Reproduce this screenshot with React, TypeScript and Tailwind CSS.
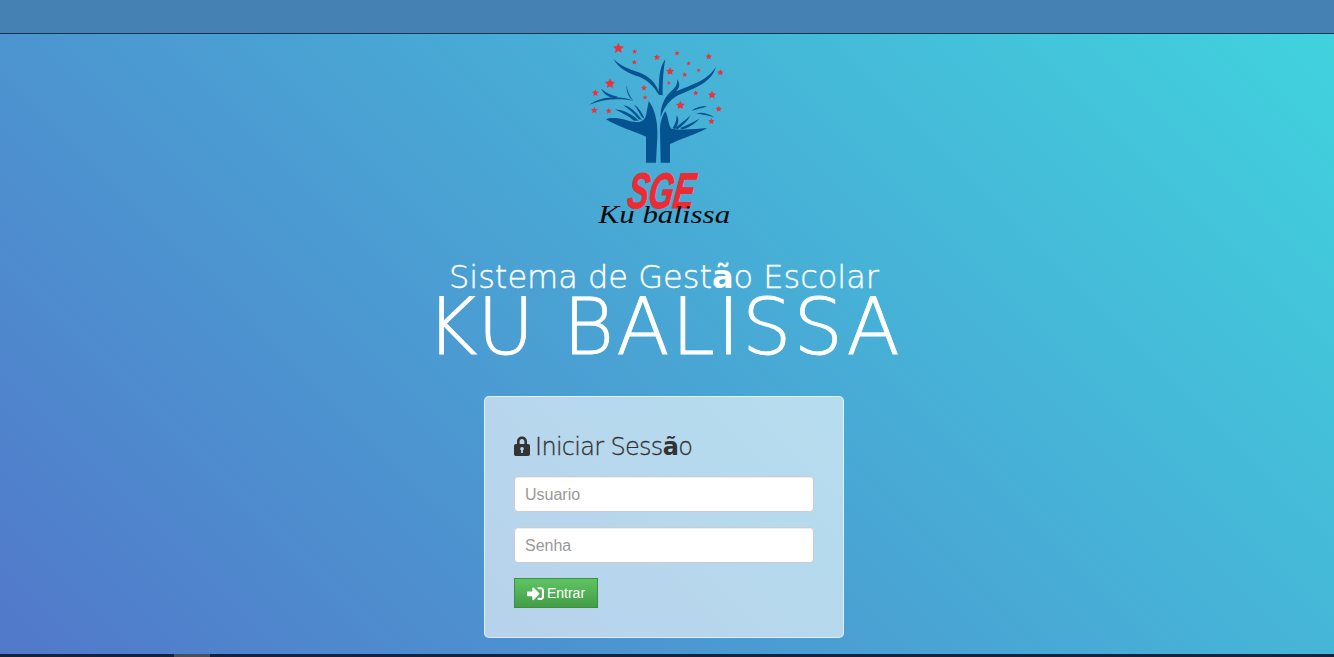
import React from 'react';
import { FaSignInAlt } from 'react-icons/fa';

const stars = [
  [145, 55, 17], [194, 65, 8], [193, 97, 8], [261, 82, 10], [321, 70, 8], [416, 80, 10],
  [356, 100, 7], [300, 124, 13], [344, 134, 8], [386, 121, 6], [451, 128, 10], [120, 161, 16],
  [76, 189, 11], [222, 174, 9], [296, 159, 6], [225, 202, 7], [377, 189, 8], [426, 195, 13],
  [73, 241, 11], [116, 243, 9], [331, 226, 14], [446, 237, 10], [424, 274, 10],
];

function starPoints(cx: number, cy: number, r: number) {
  const pts: string[] = [];
  for (let i = 0; i < 10; i++) {
    const rad = i % 2 === 0 ? r : r * 0.48;
    const a = -Math.PI / 2 + (i * Math.PI) / 5;
    pts.push(`${(cx + rad * Math.cos(a)).toFixed(1)},${(cy + rad * Math.sin(a)).toFixed(1)}`);
  }
  return pts.join(' ');
}

function Logo() {
  return (
    <svg viewBox="0 15 540 600" className="w-[180px] h-[200px] -ml-2 mt-px shrink-0">
      <g fill="#04528f">
        {/* trunks and hands */}
        <path d="M108 268 C118 262 140 264 160 268 C180 274 200 280 214 274 C226 268 228 258 230 246 L236 214 C252 232 264 270 262 320 L258 398 L228 398 L228 320 C190 304 140 288 108 268 Z" />
        <path d="M272 398 L270 300 C270 280 276 258 286 244 C296 262 294 284 304 296 C340 302 380 296 411 294 C400 304 350 320 300 342 L300 398 Z" />
        {/* fingers */}
        <path d="M134 238 C160 240 186 252 206 272 L192 272 C176 258 154 248 134 238 Z" />
        <path d="M160 226 C180 228 200 248 216 270 L206 268 C194 252 178 238 160 226 Z" />
        <path d="M192 224 C206 230 216 250 224 266 L216 262 C208 250 202 236 192 224 Z" />
        <path d="M320 256 C330 270 324 286 314 298 L308 294 C316 282 320 270 320 256 Z" />
        <path d="M362 256 C352 274 338 288 322 298 L314 294 C332 282 346 270 362 256 Z" />
        <path d="M388 266 C374 282 356 294 336 298 L330 294 C350 286 370 276 388 266 Z" />
        {/* branches */}
        <path d="M130 86 C150 108 180 118 210 128 C235 138 256 156 266 184 C268 150 266 116 286 88 C280 120 278 150 278 196 L266 194 C252 168 232 150 208 140 C176 130 146 116 130 86 Z" />
        <path d="M272 262 C270 230 284 198 310 178 C320 168 322 160 322 148 C332 164 328 174 318 184 C352 168 410 156 438 110 C424 162 362 178 324 196 C298 210 282 232 272 262 Z" />
        <path d="M58 224 C90 202 140 194 190 212 C140 204 100 208 58 224 Z" />
        <path d="M170 166 C172 182 178 198 190 212 C178 206 168 186 170 166 Z" />
        <path d="M94 176 C106 188 124 196 144 200 L132 204 C112 200 100 190 94 176 Z" />
        <path d="M364 242 C378 232 394 228 412 228 C398 234 382 238 364 242 Z" />
        <path d="M378 250 C396 246 416 250 432 262 C414 256 396 254 378 250 Z" />
      </g>
      <g fill="#ee3039">
        {stars.map(([x, y, r]) => (
          <polygon key={`${x}-${y}`} points={starPoints(x, y, r)} />
        ))}
      </g>
      <text
        transform="translate(268 535) skewX(-8)"
        textAnchor="middle"
        fill="#ee2a32"
        stroke="#ee2a32"
        strokeWidth="3"
        fontFamily="'Liberation Sans', sans-serif"
        fontWeight="700"
        fontStyle="italic"
        fontSize="150"
        textLength="200"
        lengthAdjust="spacingAndGlyphs"
      >
        SGE
      </text>
      <text
        x="283"
        y="578"
        textAnchor="middle"
        fill="#0a0a0a"
        fontFamily="'Liberation Serif', serif"
        fontStyle="italic"
        fontSize="76"
        textLength="395"
        lengthAdjust="spacingAndGlyphs"
      >
        Ku balissa
      </text>
    </svg>
  );
}

function LockIcon() {
  return (
    <svg viewBox="0 0 16 20" className="w-4 h-5 shrink-0 -mt-[3px]" fill="#333">
      <path
        fillRule="evenodd"
        d="M3 8V5.500C3 2.500 5.200 0.500 8 0.500s5 2 5 5V8h1.200c.9 0 1.800.8 1.800 1.700v8.600c0 .9-.9 1.700-1.800 1.700H1.800C.9 20 0 19.200 0 18.300V9.700C0 8.800.9 8 1.800 8H3zm2.600 0h4.800V5.600C10.400 4.100 9.400 3 8 3S5.600 4.100 5.600 5.600V8zM8 11a1.800 1.800 0 0 0-.9 3.350V17h1.800v-2.650A1.800 1.800 0 0 0 8 11z"
      />
    </svg>
  );
}

export default function App() {
  return (
    <div className="h-screen flex flex-col overflow-hidden font-['Liberation_Sans',sans-serif]">
      <main className="flex-1 min-h-0 bg-[linear-gradient(45deg,#5278ca,#40d4de)]">
        <div className="h-[34px] bg-[#4681b4] border-b border-[#17354d]" />
        <div className="w-[1328px] flex flex-col items-center">
          <Logo />
          <h1 className="mt-[23px] text-white text-center font-['DejaVu_Sans',sans-serif] font-extralight">
            <div className="text-[32px] leading-[38px] whitespace-nowrap [-webkit-text-stroke:0.4px_white]">
              Sistema de Gest<b className="font-bold [-webkit-text-stroke:0]">ã</b>o Escolar
            </div>
            <div className="text-[78px] leading-[62px] tracking-[2px] whitespace-nowrap [-webkit-text-stroke:0.8px_white]">
              KU BALISSA
            </div>
          </h1>
          <form className="mt-[38px] w-[360px] h-[242px] rounded-[5px] border border-white/60 bg-white/60 p-[29px] pt-[30px]">
            <h2 className="flex items-center gap-[5px] h-[40px] text-[#333] text-[24px] tracking-[-0.7px] font-['DejaVu_Sans',sans-serif] font-extralight [-webkit-text-stroke:0.3px_#333]">
              <LockIcon />
              <span>
                Iniciar Sess<b className="font-bold [-webkit-text-stroke:0]">ã</b>o
              </span>
            </h2>
            <input
              placeholder="Usuario"
              className="block mt-[9px] w-[300px] h-[36px] px-[10px] pt-[2px] text-base text-[#555] placeholder:text-[#999] bg-white border border-[#ccc] rounded-[4px] shadow-[inset_0_1px_1px_rgba(0,0,0,0.075)]"
            />
            <input
              placeholder="Senha"
              className="block mt-[15px] w-[300px] h-[36px] px-[10px] pt-[2px] text-base text-[#555] placeholder:text-[#999] bg-white border border-[#ccc] rounded-[4px] shadow-[inset_0_1px_1px_rgba(0,0,0,0.075)]"
            />
            <button
              type="button"
              className="mt-[15px] flex items-center justify-center gap-[3px] w-[84px] h-[30px] text-sm text-white border border-[#3e8f3e] bg-[linear-gradient(to_bottom,#5fc464,#449d48)]"
            >
              <FaSignInAlt className="w-[17px] h-[17px]" />
              Entrar
            </button>
          </form>
        </div>
      </main>
      <div className="h-[3px] shrink-0 bg-[#12233f] pl-[174px]">
        <div className="w-[36px] h-full bg-[#464f5c]" />
      </div>
    </div>
  );
}
